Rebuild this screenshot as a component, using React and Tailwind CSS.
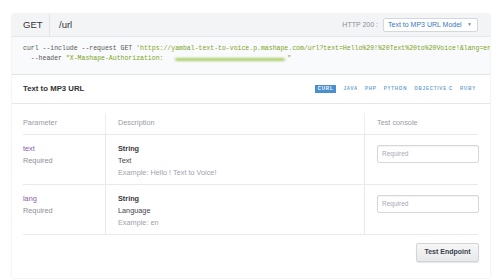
import React from 'react';

const params = [
  { name: 'text', type: 'String', desc: 'Text', example: 'Example: Hello ! Text to Voice!' },
  { name: 'lang', type: 'String', desc: 'Language', example: 'Example: en' },
];

const tabs = ['JAVA', 'PHP', 'PYTHON', 'OBJECTIVE C', 'RUBY'];

export default function App() {
  return (
    <div className="w-[500px] h-[280px] bg-white overflow-hidden" style={{ fontFamily: '"Liberation Sans", Arial, sans-serif' }}>
      <div className="ml-[12px] mt-[14px] w-[478px] shadow-[0_0_2px_rgba(0,0,0,0.12)]">
        {/* header bar */}
        <div className="flex items-center h-[23px] bg-[#f3f4f6] border-b border-[#e6e7ea]">
          <div className="w-[38px] h-full flex items-center pl-[11px] border-r border-[#e3e4e8] text-[9.5px] text-[#333]">GET</div>
          <div className="pl-[9px] text-[9.5px] text-[#333]">/url</div>
          <div className="ml-auto flex items-center pr-[12px]">
            <span className="text-[7px] text-[#8a8f99] mr-[5px]">HTTP 200 :</span>
            <div className="w-[95px] h-[14px] bg-white border border-[#d3d8e0] rounded-[2px] flex items-center pl-[4px] pr-[5px] text-[7px] text-[#3579bd]">
              Text to MP3 URL Model
              <span className="ml-auto text-[5px] text-[#888]">▼</span>
            </div>
          </div>
        </div>

        {/* code */}
        <div className="h-[38px] bg-[#f9fafb] border-b border-[#e3e4e7] pt-[7px] pl-[11px] overflow-hidden whitespace-pre text-[6.5px] leading-[10px] text-[#555]" style={{ fontFamily: '"Liberation Mono", "Courier New", monospace' }}>
          <div>curl --include --request GET <span className="text-[#7ea424]">'https://yambal-text-to-voice.p.mashape.com/url?text=Hello%20!%20Text%20to%20Voice!&amp;lang=en'</span></div>
          <div className="flex items-center">
            {'  --header '}
            <span className="text-[#7ea424]">"X-Mashape-Authorization: </span>
            <span className="inline-block w-[110px] h-[3px] ml-[8px] rounded-full bg-[#a9cf6a] blur-[1px]" />
            <span className="text-[#7ea424] ml-[2px]">"</span>
          </div>
        </div>

        {/* title + tabs */}
        <div className="h-[29px] flex items-center pl-[11px] pr-[14px] border-b border-[#e6e7ea]">
          <span className="text-[7.8px] font-bold text-[#333]">Text to MP3 URL</span>
          <div className="ml-auto flex items-center gap-[7px] text-[4.5px] font-bold tracking-[0.8px] text-[#6b9fd0]">
            <span className="bg-[#4a90cf] text-white px-[3px] h-[8px] flex items-center">CURL</span>
            {tabs.map((t) => (
              <span key={t}>{t}</span>
            ))}
          </div>
        </div>

        {/* table */}
        <div className="px-[11px] pt-[9px] pb-[16px] bg-white">
          <div className="grid grid-cols-[82px_259px_114px] text-[7.3px]">
            <div className="h-[21px] flex items-center text-[#9a9aa6]">Parameter</div>
            <div className="h-[21px] flex items-center pl-[12px] border-l border-[#eeeef0] text-[#9a9aa6]">Description</div>
            <div className="h-[21px] flex items-center pl-[12px] border-l border-[#eeeef0] text-[#9a9aa6]">Test console</div>
            <div className="col-span-3 border-b border-[#e9e9ec]" />
            {params.map((p) => (
              <React.Fragment key={p.name}>
                <div className="h-[50px] pt-[8px] leading-[12px] border-b border-[#e9e9ec]">
                  <div className="text-[#8b5aa5]">{p.name}</div>
                  <div className="text-[#8f8f9a]">Required</div>
                </div>
                <div className="h-[50px] pt-[8px] pl-[12px] leading-[12px] border-l border-b border-[#e9e9ec]">
                  <div className="font-bold text-[#3a3a44]">{p.type}</div>
                  <div className="text-[#444450]">{p.desc}</div>
                  <div className="text-[#a2a2ad]">{p.example}</div>
                </div>
                <div className="h-[50px] pt-[10px] pl-[12px] border-l border-b border-[#e9e9ec]">
                  <div className="h-[18px] w-[102px] border border-[#d5d7dc] rounded-[2px] shadow-[inset_0_1px_1px_rgba(0,0,0,0.05)] flex items-center pl-[4px] text-[6.5px] text-[#a8a8b2]">Required</div>
                </div>
              </React.Fragment>
            ))}
          </div>
          <div className="flex justify-end mt-[8px]">
            <button className="w-[63px] h-[19px] bg-gradient-to-b from-[#f7f7f8] to-[#e8e9eb] border border-[#d2d4d8] rounded-[2px] shadow-[0_1px_1px_rgba(0,0,0,0.1)] text-[7px] font-bold text-[#3a3f4a]">
              Test Endpoint
            </button>
          </div>
        </div>
      </div>
    </div>
  );
}
